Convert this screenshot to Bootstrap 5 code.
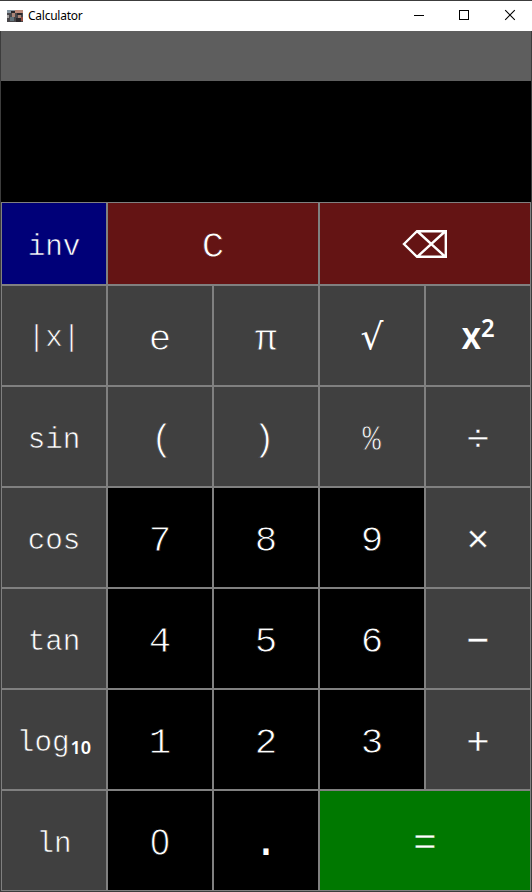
<!DOCTYPE html>
<html lang="en">
<head>
<meta charset="utf-8">
<title>Calculator</title>
<link href="https://cdn.jsdelivr.net/npm/bootstrap@5.3.0/dist/css/bootstrap.min.css" rel="stylesheet">
<style>
body{width:532px;height:892px;background:#3c3c3c;overflow:hidden}
.win{height:892px;padding-top:1px;background:#3c3c3c}
.titlebar{height:30px;padding-left:7px;font:12px/30px "Noto Sans","Open Sans",sans-serif;color:#000}
.titlebar .wbtn{width:46px;height:30px}
.caption{margin-left:5px;letter-spacing:-.25px}
.client{margin:0 1px 1px}
.history{height:50px;background:#5e5e5e}
.screen{height:121px;background:#000}
.keys{grid-template-columns:repeat(5,106px);grid-template-rows:83px repeat(6,101px)}
.key{--face:#404040;border:1px solid #808080;border-radius:0;background:var(--face);color:#fff;padding:8px 0 0;font:37.5px/1 "Liberation Mono",monospace;display:flex;align-items:center;justify-content:center;min-width:0;-webkit-text-stroke:.8px var(--face)}
.key:hover{background:#505050;color:#fff}
.fn{font-size:29.3px;padding-top:8px;-webkit-text-stroke-width:.6px}
.abs{padding-top:6px}
.num{--face:#000}
.wide{grid-column:span 2}
.red{--face:#641414}
.blue{--face:#000078}
.green{--face:#007800}
.low{padding-top:11px}
.op{font-size:39px;-webkit-text-stroke-width:.35px;padding-top:9px}
.par-l{padding-left:4px}
.par-r{padding-right:4px}
.zero{font:36px/1 "Liberation Sans",sans-serif;padding-top:5px}
.zero span{transform:scaleX(.97)}
.pt{font-size:44px;-webkit-text-stroke-width:0;padding-top:4px}
.rad{font:36px/1 "DejaVu Sans",sans-serif;padding-top:3px;-webkit-text-stroke-width:0}
.pct{font-size:36px;padding-top:8px;-webkit-text-stroke-width:.8px}
.pct span{transform:scaleX(.85)}
.sq{font:600 38px/1 "Noto Sans",sans-serif;padding:0 0 3px 1px;-webkit-text-stroke-width:0}
.sq span{display:flex;align-items:flex-start;transform:scaleX(.92)}
.sq sup{font-size:26px;line-height:1;top:0;margin:-1px 0 0 0}
.log{padding-left:0}
.log span{font:600 18px/1 "Noto Sans",sans-serif;padding-top:7px;margin-left:1px;-webkit-text-stroke-width:0}
.ico{padding:0}
</style>
<script src="https://cdn.jsdelivr.net/npm/bootstrap@5.3.0/dist/js/bootstrap.bundle.min.js"></script>
</head>
<body>
<div class="win">
  <header class="titlebar d-flex align-items-center bg-white">
    <svg width="16" height="12" shape-rendering="crispEdges"><path fill="#49474a" d="M0 0h16v12H0z"/><path fill="#8795a0" d="M0 0h8v3H0z"/><path fill="#bc8978" d="M8 0h8v3H8z"/><path fill="#a98578" d="M5 3h3v4H5zM11 5h3v3h-3z"/><path fill="#292629" d="M4 1h4v2H4zM10 3h5v2h-5zM9 8h5v4H9z"/><path fill="#62727a" d="M3 7h4v4H3z"/><path fill="#934a3e" d="M14 7h2v4h-2z"/><path fill="#a8a5a5" d="M0 5h2v3H0z"/></svg>
    <span class="caption">Calculator</span>
    <div class="d-flex ms-auto">
      <svg class="wbtn" shape-rendering="crispEdges"><path d="M20 14h10v1H20z"/></svg>
      <svg class="wbtn" shape-rendering="crispEdges"><path d="M19.5 9.5h9v9h-9z" fill="none" stroke="#000"/></svg>
      <svg class="wbtn"><path d="M19.2 9.2l9.6 9.6M28.8 9.2l-9.6 9.6" fill="none" stroke="#000" stroke-width="1.1"/></svg>
    </div>
  </header>
  <main class="client">
    <div class="history"></div>
    <div class="screen"></div>
    <div class="keys d-grid">
      <button class="btn key fn blue">inv</button>
      <button class="btn key wide red">C</button>
      <button class="btn key wide red ico" aria-label="Backspace"><svg width="46" height="30" fill="none" stroke="#fff" stroke-width="2.4"><path d="M2 15L15 2.2H43.8V27.8H15zM15 2L43.5 28M15 28L43.5 2"/></svg></button>

      <button class="btn key fn abs">|x|</button>
      <button class="btn key low">e</button>
      <button class="btn key low">π</button>
      <button class="btn key rad">√</button>
      <button class="btn key sq"><span>x<sup>2</sup></span></button>

      <button class="btn key fn">sin</button>
      <button class="btn key par-l">(</button>
      <button class="btn key par-r">)</button>
      <button class="btn key pct"><span>%</span></button>
      <button class="btn key op">÷</button>

      <button class="btn key fn">cos</button>
      <button class="btn key num">7</button>
      <button class="btn key num">8</button>
      <button class="btn key num">9</button>
      <button class="btn key op">×</button>

      <button class="btn key fn">tan</button>
      <button class="btn key num">4</button>
      <button class="btn key num">5</button>
      <button class="btn key num">6</button>
      <button class="btn key op">−</button>

      <button class="btn key fn log">log<span>10</span></button>
      <button class="btn key num">1</button>
      <button class="btn key num">2</button>
      <button class="btn key num">3</button>
      <button class="btn key op">+</button>

      <button class="btn key fn">ln</button>
      <button class="btn key num zero"><span>0</span></button>
      <button class="btn key num pt">.</button>
      <button class="btn key wide green op">=</button>
    </div>
  </main>
</div>
</body>
</html>
